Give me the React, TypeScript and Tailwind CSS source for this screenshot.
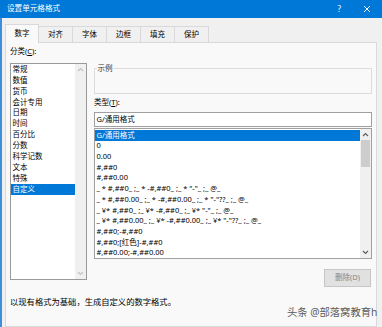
import React from "react";

const FONT = { fontFamily: '"Noto Sans", "Noto Sans CJK SC", sans-serif' };

const tabs = ["数字", "对齐", "字体", "边框", "填充", "保护"];
const categories = ["常规", "数值", "货币", "会计专用", "日期", "时间", "百分比", "分数", "科学记数", "文本", "特殊", "自定义"];
const formats = [
  "G/通用格式",
  "0",
  "0.00",
  "#,##0",
  "#,##0.00",
  '_ * #,##0_ ;_ * -#,##0_ ;_ * "-"_ ;_ @_',
  '_ * #,##0.00_ ;_ * -#,##0.00_ ;_ * "-"??_ ;_ @_',
  '_ ¥* #,##0_ ;_ ¥* -#,##0_ ;_ ¥* "-"_ ;_ @_',
  '_ ¥* #,##0.00_ ;_ ¥* -#,##0.00_ ;_ ¥* "-"??_ ;_ @_',
  "#,##0;-#,##0",
  "#,##0;[红色]-#,##0",
  "#,##0.00;-#,##0.00",
];

function Chevron({ up, color }: { up?: boolean; color: string }) {
  return (
    <svg width="7" height="5" viewBox="0 0 7 5">
      <path d={up ? "M1 4 L3.5 1.5 L6 4" : "M1 1 L3.5 3.5 L6 1"} fill="none" stroke={color} strokeWidth="1.2" />
    </svg>
  );
}

export default function App() {
  return (
    <div className="w-[382px] h-[327px] overflow-hidden flex flex-col text-[7.5px] text-black" style={FONT}>
      {/* title bar */}
      <div className="h-[18px] bg-[#0078d7] flex items-center text-white shrink-0">
        <span className="ml-[7px] text-[7.6px]">设置单元格格式</span>
        <span className="ml-auto mr-[22px] text-[8px]">?</span>
        <svg width="8" height="8" viewBox="0 0 8 8" className="mr-[11px]">
          <path d="M1 1 L7 7 M7 1 L1 7" stroke="white" strokeWidth="1" />
        </svg>
      </div>

      <div className="flex-1 flex flex-col bg-[#f0f0f0] border-l-2 border-[#3d8fdb] pl-[3px] pr-[5px] min-h-0">
        {/* tabs */}
        <div className="flex items-end h-[18px] mt-[6px] shrink-0">
          {tabs.map((t, i) =>
            i === 0 ? (
              <div
                key={t}
                className="relative z-10 w-[34px] h-[19px] -mb-px bg-[#f9f9f9] border border-b-0 border-[#d9d9d9] flex items-center justify-center"
              >
                {t}
              </div>
            ) : (
              <div
                key={t}
                className="w-[34px] h-[16px] bg-[#f0f0f0] border border-b-0 border-l-0 border-[#d9d9d9] flex items-center justify-center"
              >
                {t}
              </div>
            )
          )}
        </div>

        {/* panel */}
        <div className="flex-1 bg-[#f9f9f9] border border-[#d9d9d9] px-[4px] min-h-0">
          <div className="flex gap-[7px]">
            {/* left column */}
            <div className="w-[77px] flex flex-col">
              <div className="h-[18px] flex items-center">
                分类(<span className="underline">C</span>):
              </div>
              <div className="mt-[2px] h-[217px] bg-white border border-[#9a9a9a] flex">
                <div className="flex-1">
                  {categories.map((c, i) => (
                    <div
                      key={c}
                      className={
                        "h-[10.9px] flex items-center pl-[1.5px] " +
                        (i === categories.length - 1 ? "bg-[#0078d7] text-white" : "")
                      }
                    >
                      {c}
                    </div>
                  ))}
                </div>
                <div className="w-[11px] bg-[#f0f0f0] flex flex-col items-center justify-between py-[3px]">
                  <Chevron up color="#c2c2c2" />
                  <Chevron color="#c2c2c2" />
                </div>
              </div>
            </div>

            {/* right column */}
            <div className="w-[278px] flex flex-col">
              <fieldset className="mt-[20px] h-[31px] border border-[#dcdcdc] px-[2px]">
                <legend className="leading-[10px] px-[0.5px] text-[#333]">示例</legend>
              </fieldset>
              <div className="h-[18px] flex items-center">
                类型(<span className="underline">T</span>):
              </div>
              <div className="h-[15px] bg-white border border-[#a0a0a0] flex items-center pl-[1.5px]">
                G/通用格式
              </div>
              <div className="mt-[1px] h-[131px] bg-white border border-[#a0a0a0] flex">
                <div className="flex-1 pt-[1px] whitespace-pre overflow-hidden">
                  {formats.map((f, i) => (
                    <div
                      key={i}
                      className={"h-[10.7px] flex items-center pl-[1.5px] " + (i === 0 ? "bg-[#0078d7] text-white" : "")}
                    >
                      {f}
                    </div>
                  ))}
                </div>
                <div className="w-[11px] bg-[#f0f0f0] flex flex-col items-center">
                  <div className="h-[11px] flex items-center">
                    <Chevron up color="#606060" />
                  </div>
                  <div className="w-[9px] h-[27px] bg-[#cdcdcd]" />
                  <div className="mt-auto h-[11px] flex items-center">
                    <Chevron color="#606060" />
                  </div>
                </div>
              </div>
              <div className="mt-[10px] self-end mr-[1px] w-[47px] h-[18px] bg-[#e1e1e1] border border-[#c6c6c6] text-[#858585] flex items-center justify-center">
                删除(D)
              </div>
            </div>
          </div>
          <div className="mt-[9px] h-[12px] flex items-center text-[8.3px]">
            以现有格式为基础，生成自定义的数字格式。
          </div>
        </div>
      </div>

      {/* watermark */}
      <div
        className="absolute left-[287px] top-[305px] text-[10.3px] text-[#5a5a5a] whitespace-nowrap"
        style={{ textShadow: "0 0 2px #fff" }}
      >
        头条 @部落窝教育h
      </div>
    </div>
  );
}
